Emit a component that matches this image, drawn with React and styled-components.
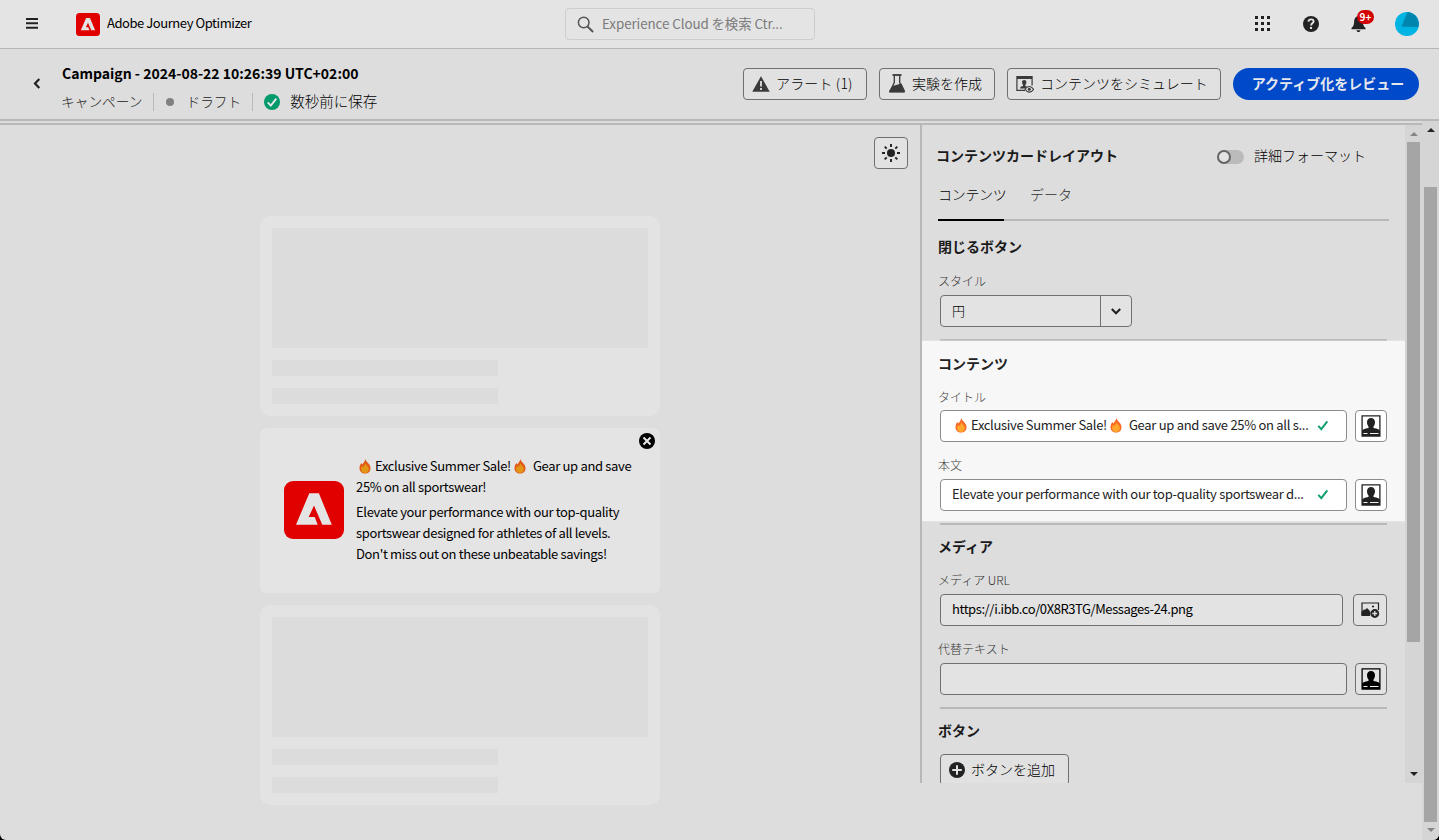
import React from 'react';
import styled, { createGlobalStyle, css } from 'styled-components';

const Global = createGlobalStyle`
  *, *::before, *::after { box-sizing: border-box; }
  body {
    margin: 0;
    background: #000;
    font-family: "Noto Sans CJK JP", "Noto Sans", sans-serif;
    font-size: 14px;
    color: #000;
    overflow: hidden;
  }
  svg { display: block; flex: none; }
`;

const Page = styled.div`
  width: 1439px;
  height: 840px;
  display: flex;
  flex-direction: column;
  overflow: hidden;
  background: #ddd;
  border-radius: 0 0 6px 6px;
`;

const Text = styled.span`
  display: block;
  white-space: nowrap;
  font-size: ${p => p.$size || 14}px;
  font-weight: ${p => p.$weight || 400};
  line-height: ${p => (p.$lh || 20) - (p.$level ? 0 : 2)}px;
  padding-bottom: ${p => (p.$level ? 0 : 2)}px;
  letter-spacing: ${p => p.$ls || 0}px;
  color: ${p => p.$color || '#000'};
`;

const Heading = styled(Text)`
  font-weight: 700;
  margin-left: -2px;
  color: ${p => (p.$lit ? '#222' : '#1a1a1a')};
`;

const TopBar = styled.header`
  height: 49px;
  flex: none;
  display: flex;
  align-items: center;
  justify-content: space-between;
  background: #e4e4e4;
  border-bottom: 1px solid #b5b5b5;
  padding: 0 20px 0 26px;
`;

const Brand = styled.div`
  width: 539px;
  display: flex;
  align-items: center;
  gap: 7px;
  & > svg:first-child { margin-right: 31px; }
`;

const Search = styled.div`
  width: 250px;
  height: 32px;
  margin-right: auto;
  padding: 0 11px;
  display: flex;
  align-items: center;
  gap: 8px;
  border: 1px solid #cdcdcd;
  border-radius: 4px;
`;

const Tools = styled.div`
  display: flex;
  align-items: center;
`;

const HelpIcon = styled.svg`
  margin-left: 32px;
`;

const BellWrap = styled.div`
  position: relative;
  margin: 0 29px 0 32px;
`;

const Badge = styled.span`
  position: absolute;
  left: 6px;
  top: -5px;
  width: 17px;
  height: 14px;
  border-radius: 7px;
  background: #d20000;
  color: #fff;
  font-size: 10px;
  font-weight: 700;
  line-height: 14px;
  text-align: center;
`;

const SubHeader = styled.div`
  height: 72px;
  flex: none;
  display: flex;
  border-bottom: 2px solid #b8b8b8;
  padding: 0 20px 0 33px;
`;

const Back = styled.div`
  width: 29px;
  padding-top: 29px;
`;

const Titles = styled.div`
  flex: 1;
  padding-top: 14px;
`;

const Meta = styled.div`
  display: flex;
  align-items: center;
  height: 20px;
  margin: 9px 0 0 -1px;
`;

const Separator = styled.i`
  width: 1px;
  height: 18px;
  background: #b9b9b9;
  margin: 0 ${p => p.$after}px 0 11px;
`;

const Dot = styled.i`
  width: 8px;
  height: 8px;
  border-radius: 50%;
  background: #808080;
  margin-right: 12px;
`;

const Actions = styled.div`
  display: flex;
  gap: 12px;
  padding-top: 19px;
`;

const Button = styled.button`
  width: ${p => p.$w}px;
  height: 32px;
  padding: 0 0 1px 8px;
  display: flex;
  align-items: center;
  gap: 6px;
  font-family: inherit;
  background: #e1e1e1;
  border: 1px solid #707070;
  border-radius: 4px;
  ${p => p.$primary && css`
    background: #0049c8;
    border: 0;
    border-radius: 16px;
    padding: 0 0 1px 4px;
    justify-content: center;
  `}
`;

const Body = styled.div`
  flex: 1;
  display: flex;
  min-height: 0;
`;

const Workspace = styled.main`
  width: 1422px;
  height: 662px;
  flex: none;
  display: flex;
  border-top: 2px solid #b8b8b8;
  margin-top: 2px;
`;

const Canvas = styled.section`
  width: 920px;
  flex: none;
  display: grid;
  grid-template-columns: 260px 400px 1fr;
  padding: 12px 12px 0 0;
`;

const Cards = styled.div`
  grid-column: 2;
  display: flex;
  flex-direction: column;
  gap: 12px;
  padding-top: 79px;
`;

const SkeletonCard = styled.div`
  height: 200px;
  flex: none;
  border-radius: 10px;
  background: #e3e3e3;
  padding: 12px;
  display: flex;
  flex-direction: column;
  gap: 12px;
`;

const Bone = styled.div`
  width: ${p => p.$w}px;
  height: ${p => p.$h}px;
  background: #dcdcdc;
`;

const MessageCard = styled.article`
  position: relative;
  height: 165px;
  flex: none;
  border-radius: 6px;
  background: #e4e4e4;
  padding: 28px 16px 0 24px;
  display: flex;
  gap: 12px;
  & > svg:first-child { margin-top: 25px; }
`;

const CloseBadge = styled.div`
  position: absolute;
  right: 5px;
  top: 5px;
`;

const Copy = styled.div`
  display: flex;
  flex-direction: column;
`;

const InlineRow = styled.div`
  display: flex;
  align-items: center;
  height: ${p => p.$h || 21}px;
  padding-left: ${p => p.$pl || 0}px;
`;

const Flame = styled.svg`
  margin: 0 ${p => p.$r || 4}px 0 ${p => p.$l || 0}px;
`;

const Paragraph = styled.div`
  margin-top: 4px;
`;

const SquareButton = styled.button`
  width: ${p => p.$w || 32}px;
  height: 32px;
  padding: 0;
  flex: none;
  display: flex;
  align-items: center;
  justify-content: center;
  background: ${p => (p.$lit ? '#fff' : '#e2e2e2')};
  border: 1px solid ${p => (p.$lit ? '#8c8c8c' : '#707070')};
  border-radius: 4px;
  justify-self: end;
`;

const Panel = styled.aside`
  width: 485px;
  flex: none;
  height: 658px;
  overflow: hidden;
  border-left: 2px solid #b8b8b8;
`;

const PanelHead = styled.div`
  height: 62px;
  display: flex;
  align-items: center;
  padding: 0 39px 0 16px;
`;

const Toggle = styled.span`
  width: 27px;
  height: 14px;
  margin: 2px 10px 0 auto;
  border-radius: 7px;
  background: #bbb;
  display: flex;
  &::before {
    content: '';
    width: 14px;
    height: 14px;
    border-radius: 50%;
    border: 2px solid #666;
    background: #e3e3e3;
  }
`;

const Tabs = styled.div`
  height: 34px;
  display: flex;
  gap: 26px;
  margin: 0 16px;
  border-bottom: 2px solid #b8b8b8;
`;

const Tab = styled.div`
  height: 34px;
  border-bottom: 2px solid ${p => (p.$active ? '#000' : 'transparent')};
  width: ${p => (p.$active ? 66 : 50)}px;
`;

const Section = styled.section`
  padding: ${p => p.$top}px 18px 0;
  height: ${p => p.$h}px;
`;

const LitSection = styled(Section)`
  background: #f7f7f7;
  box-shadow: 0 0 2px 0 #f0f0f0;
  position: relative;
`;

const Rule = styled.div`
  height: 2px;
  margin: ${p => p.$mt || 0}px 18px 0;
  background: #b8b8b8;
`;

const Label = styled.label`
  display: block;
  height: 16px;
  line-height: 16px;
  font-size: 12px;
  font-weight: 300;
  color: ${p => (p.$lit ? '#444' : '#333')};
  margin: ${p => p.$mt}px 0 ${p => p.$mb}px -2px;
  white-space: nowrap;
`;

const FieldRow = styled.div`
  display: flex;
  justify-content: space-between;
`;

const Input = styled.div`
  width: ${p => p.$w || 407}px;
  height: 32px;
  display: flex;
  align-items: center;
  justify-content: space-between;
  padding: 0 17px 2px 11px;
  background: ${p => (p.$lit ? '#fff' : '#e3e3e3')};
  border: 1px solid ${p => (p.$lit ? '#8c8c8c' : '#707070')};
  border-radius: 4px;
`;

const Select = styled.div`
  width: 192px;
  height: 32px;
  display: flex;
  border: 1px solid #707070;
  border-radius: 4px;
  background: #e3e3e3;
  & > span { flex: 1; padding: 5px 0 0 11px; }
`;

const SelectArrow = styled.div`
  width: 31px;
  display: flex;
  align-items: center;
  justify-content: center;
  border-left: 1px solid #707070;
`;

const Track = styled.div`
  width: 17px;
  flex: none;
  height: ${p => p.$h}px;
  background: #d5d5d5;
  padding: 0 2px;
  display: flex;
  flex-direction: column;
`;

const Thumb = styled.div`
  height: ${p => p.$h}px;
  background: #a5a5a5;
`;

const ArrowSlot = styled.div`
  height: ${p => p.$h}px;
  display: flex;
  justify-content: center;
  padding-top: ${p => p.$pt}px;
`;

const Arrow = ({ down, color }) => (
  <svg width="8" height="4" viewBox="0 0 8 4">
    <path d={down ? 'M0 0h8L4 4z' : 'M0 4h8L4 0z'} fill={color} />
  </svg>
);

const AdobeMark = ({ w, h, r }) => (
  <svg width={w} height={h} viewBox="0 0 60 58" preserveAspectRatio="none">
    <rect width="60" height="58" rx={r} fill="#e10000" />
    <path d="M25.300 12.300h9.600L47.800 43.800h-9.500L30 24.600l-5.300 11.500h6l3 7.700H12z" fill="#e4e4e4" />
  </svg>
);

const Fire = ({ lit, l, r }) => (
  <Flame width="12" height="15" viewBox="0 0 12 15" $l={l} $r={r}>
    <path d="M6.400 0c.5 2.200 2 3 3 4.600C10.800 6 11.500 7.500 11.500 9.300c0 3.300-2.400 5.300-5.500 5.300S.5 12.500.5 9.300C.5 7 1.300 5.300 2.400 4l.9 1.400C4.600 4 5.900 2.300 6.400 0z" fill={lit ? '#fb6a25' : '#e25a17'} />
    <path d="M6.300 4.300c.4 1.200 1.600 2 2.300 3 .8 1 1.200 1.700 1.200 2.800 0 2.500-1.600 4-3.800 4s-3.900-1.500-3.900-4c0-1.400.5-2.200 1.200-3l.8.9c1.200-1 2-2.200 2.200-3.700z" fill={lit ? '#fda72d' : '#e29615'} />
  </Flame>
);

const Check = () => (
  <svg width="12" height="11" viewBox="0 0 12 11">
    <path d="M1.300 5.800l3 3.300L10.300 1.400" fill="none" stroke="#12a06f" strokeWidth="2" />
  </svg>
);

const Profile = ({ color = '#000' }) => (
  <svg width="20" height="22" viewBox="0 0 20 22">
    <path d="M1.100 .8h17.800v20.400H1.100z" fill="none" stroke={color} strokeWidth="1.300" />
    <path d="M1 21V16c0-1.500 2.500-2.500 6.500-3.100v-1.400C6.400 10.400 6 8.700 6 7.300c0-2.600 1.500-4.300 4-4.300s4 1.700 4 4.300c0 1.400-.5 3.100-1.500 4.200v1.400c4 .6 6.500 1.600 6.500 3.100v5z" fill={color} />
    <path d="M2.500 18.500h4M9 18.500h8.500" stroke="#f4f4f4" strokeWidth="1.200" />
  </svg>
);

const Bones = () => (
  <SkeletonCard>
    <Bone $w={376} $h={120} />
    <Bone $w={226} $h={16} />
    <Bone $w={226} $h={16} />
  </SkeletonCard>
);

export default function App() {
  return (
    <>
      <Global />
      <Page>
        <TopBar>
          <Brand>
            <svg width="12" height="12" viewBox="0 0 12 12"><path d="M0 1h12M0 5.300h12M0 9.700h12" stroke="#222" strokeWidth="1.900" /></svg>
            <AdobeMark w={24} h={23} r={9} />
            <Text $size={13} $ls={-0.44}>Adobe Journey Optimizer</Text>
          </Brand>
          <Search>
            <svg width="17" height="17" viewBox="0 0 17 17" fill="none" stroke="#555"><circle cx="6.700" cy="6.500" r="5.300" strokeWidth="1.500" /><path d="M10.500 10.500l5.600 5.500" strokeWidth="1.900" /></svg>
            <Text $size={13.4} $color="#7b7b7b" $ls={-0.09}>Experience Cloud を検索 Ctr...</Text>
          </Search>
          <Tools>
            <svg width="16" height="16" viewBox="0 0 16 16" fill="#222">
              {[0, 6, 12].map(y => [0, 6, 12].map(x => <rect key={x + '-' + y} x={x} y={y} width="3" height="3" />))}
            </svg>
            <HelpIcon width="16" height="16" viewBox="0 0 16 16">
              <circle cx="8" cy="8" r="8" fill="#222" />
              <path d="M5.400 5.600c.2-1.500 1.200-2.200 2.700-2.200 1.600 0 2.500.8 2.500 2 0 1.900-2.500 2-2.500 4" fill="none" stroke="#e4e4e4" strokeWidth="1.900" />
              <circle cx="8" cy="11.900" r="1.200" fill="#e4e4e4" />
            </HelpIcon>
            <BellWrap>
              <svg width="15" height="18" viewBox="0 0 15 18" fill="#222">
                <path d="M7.500 1C4.300 1.500 3.300 4 3.100 7c-.2 3-.6 4.500-2.600 6v1.200h14V13c-2-1.500-2.400-3-2.600-6C11.700 4 10.700 1.500 7.500 1zM5.500 15.200h4c-.4 1.300-1 1.900-2 1.900s-1.600-.6-2-1.900z" />
              </svg>
              <Badge>9+</Badge>
            </BellWrap>
            <svg width="24" height="24" viewBox="0 0 24 24">
              <circle cx="12" cy="12" r="12" fill="#00b4e4" />
              <path d="M12.500 0A12 12 0 0 1 23.300 15.200L6.500 14.500z" fill="#0086ae" />
            </svg>
          </Tools>
        </TopBar>

        <SubHeader>
          <Back>
            <svg width="8" height="11" viewBox="0 0 8 11"><path d="M6.300 1L2 5.500 6.300 10" fill="none" stroke="#222" strokeWidth="2.200" /></svg>
          </Back>
          <Titles>
            <Text $level $weight={700}>Campaign - 2024-08-22 10:26:39 UTC+02:00</Text>
            <Meta>
              <Text $weight={300} $color="#222" $size={13.7}>キャンペーン</Text>
              <Separator $after={12} />
              <Dot />
              <Text $weight={300} $color="#222" $size={13.7}>ドラフト</Text>
              <Separator $after={11} />
              <svg width="16" height="16" viewBox="0 0 16 16"><circle cx="8" cy="8" r="8" fill="#009a6c" /><path d="M3.700 8.300l3.100 3.300 5.500-7" fill="none" stroke="#e8e8e8" strokeWidth="1.900" /></svg>
              <InlineRow $pl={10}><Text $size={14.5} $weight={300}>数秒前に保存</Text></InlineRow>
            </Meta>
          </Titles>
          <Actions>
            <Button $w={124}>
              <svg width="18" height="16" viewBox="0 0 18 16"><path d="M9 .3L17.700 15.700H.3z" fill="#3a3a3a" /><path d="M9 5v5.500M9 12v2" stroke="#e1e1e1" strokeWidth="1.800" /></svg>
              <Text $weight={300} $ls={0.15}>アラート (1)</Text>
            </Button>
            <Button $w={116}>
              <svg width="18" height="19" viewBox="0 0 18 19"><path d="M4.500 1h9" stroke="#3a3a3a" strokeWidth="1.800" /><path d="M6.300 1.500v7L2 17.500h14L11.700 8.500v-7" fill="none" stroke="#3a3a3a" strokeWidth="1.300" /><path d="M4.500 12l9-2.500 3.500 7.500-.7 1.500H1.500L1.100 17z" fill="#3a3a3a" /></svg>
              <Text $weight={300}>実験を作成</Text>
            </Button>
            <Button $w={214}>
              <svg width="18" height="18" viewBox="0 0 18 18" fill="#3a3a3a">
                <path d="M.3 1h16.400v9.500h-1.200V4H1.500v10.700H9V16H.3z" />
                <path d="M4 13.500c0-1.700 1.500-2.200 3-2.500v-1C6.300 9 6 8.300 6 7.300c0-1.400.8-2.300 2.200-2.300s2.200.9 2.200 2.300c0 1-.3 1.700-1 2.700v1l1.600.5-2 2z" />
                <path d="M9 14.300c1.300-2 2.600-2.800 4.300-2.800s3 .8 4.300 2.800c-1.300 2-2.600 2.800-4.300 2.800S10.300 16.300 9 14.300z" fill="#e1e1e1" stroke="#3a3a3a" strokeWidth="1.100" />
                <circle cx="13.300" cy="14.300" r="1.500" />
              </svg>
              <Text $weight={300}>コンテンツをシミュレート</Text>
            </Button>
            <Button $w={186} $primary>
              <Text $weight={700} $color="#e6e8ee">アクティブ化をレビュー</Text>
            </Button>
          </Actions>
        </SubHeader>

        <Body>
          <Workspace>
            <Canvas>
              <Cards>
                <Bones />
                <MessageCard>
                  <AdobeMark w={60} h={58} r={9} />
                  <Copy>
                    <InlineRow $pl={3}>
                      <Fire r={4} />
                      <Text $size={13} $ls={-0.33}>Exclusive Summer Sale!</Text>
                      <Fire l={3} r={7} />
                      <Text $size={13} $ls={-0.33}>Gear up and save</Text>
                    </InlineRow>
                    <Text $size={13} $lh={21} $ls={-0.33}>25% on all sportswear!</Text>
                    <Paragraph>
                      <Text $size={13} $lh={21} $ls={-0.36}>Elevate your performance with our top-quality</Text>
                      <Text $size={13} $lh={21} $ls={-0.36}>sportswear designed for athletes of all levels.</Text>
                      <Text $size={13} $lh={21} $ls={-0.36}>Don't miss out on these unbeatable savings!</Text>
                    </Paragraph>
                  </Copy>
                  <CloseBadge>
                    <svg width="16" height="16" viewBox="0 0 16 16"><circle cx="8" cy="8" r="8" fill="#000" /><path d="M4.500 4.500l7 7M11.500 4.500l-7 7" stroke="#e8e8e8" strokeWidth="2" /></svg>
                  </CloseBadge>
                </MessageCard>
                <Bones />
              </Cards>
              <SquareButton $w={34}>
                <svg width="18" height="18" viewBox="0 0 18 18">
                  <circle cx="9" cy="9" r="4" fill="#222" />
                  <path d="M9 0v3M9 15v3M0 9h3M15 9h3M2.700 2.700l2 2M13.300 13.300l2 2M15.300 2.700l-2 2M4.700 13.300l-2 2" stroke="#222" strokeWidth="1.900" />
                </svg>
              </SquareButton>
            </Canvas>
            <Panel>
              <PanelHead>
                <Heading>コンテンツカードレイアウト</Heading>
                <Toggle />
                <Text $weight={300}>詳細フォーマット</Text>
              </PanelHead>
              <Tabs>
                <Tab $active><Text $weight={300} $lh={16} $ls={-0.3}>コンテンツ</Text></Tab>
                <Tab><Text $weight={300} $lh={16} $color="#333">データ</Text></Tab>
              </Tabs>
              <Section $top={16} $h={118}>
                <Heading>閉じるボタン</Heading>
                <Label $mt={16} $mb={6}>スタイル</Label>
                <Select>
                  <Text $level $weight={300} $size={13}>円</Text>
                  <SelectArrow>
                    <svg width="10" height="7" viewBox="0 0 10 7"><path d="M.8 1L5 5.300 9.200 1" fill="none" stroke="#222" strokeWidth="2.100" /></svg>
                  </SelectArrow>
                </Select>
              </Section>
              <Rule />
              <LitSection $top={13} $h={180}>
                <Heading $lit>コンテンツ</Heading>
                <Label $lit $mt={15} $mb={5}>タイトル</Label>
                <FieldRow>
                  <Input $lit>
                    <InlineRow $pl={3}>
                      <Fire lit r={4} />
                      <Text $level $size={13} $ls={-0.33} $color="#222">Exclusive Summer Sale!</Text>
                      <Fire lit l={3} r={7} />
                      <Text $level $size={13} $ls={-0.3} $color="#222">Gear up and save 25% on all s...</Text>
                    </InlineRow>
                    <Check />
                  </Input>
                  <SquareButton $lit><Profile color="#222" /></SquareButton>
                </FieldRow>
                <Label $lit $mt={15} $mb={6}>本文</Label>
                <FieldRow>
                  <Input $lit>
                    <Text $level $size={13} $ls={-0.33} $color="#222">Elevate your performance with our top-quality sportswear d...</Text>
                    <Check />
                  </Input>
                  <SquareButton $lit><Profile color="#222" /></SquareButton>
                </FieldRow>
              </LitSection>
              <Rule $mt={2} />
              <Section $top={12} $h={182}>
                <Heading>メディア</Heading>
                <Label $mt={15} $mb={6}>メディア URL</Label>
                <FieldRow>
                  <Input $w={403}><Text $level $size={13} $ls={-0.43}>https://i.ibb.co/0X8R3TG/Messages-24.png</Text></Input>
                  <SquareButton $w={34}>
                    <svg width="19" height="16" viewBox="0 0 19 16">
                      <path d="M1 13.500V1h16.500v7" fill="none" stroke="#222" strokeWidth="1.200" />
                      <path d="M.5 14V10L3 7.500h1.500L6 6l2 2 1.500 2-.5 4z" fill="#222" />
                      <circle cx="12" cy="4.500" r="1.100" fill="#222" />
                      <circle cx="13.800" cy="11.500" r="4.400" fill="#222" />
                      <path d="M13.800 9v5M11.300 11.500h5" stroke="#e2e2e2" strokeWidth="1.300" />
                    </svg>
                  </SquareButton>
                </FieldRow>
                <Label $mt={15} $mb={6}>代替テキスト</Label>
                <FieldRow>
                  <Input />
                  <SquareButton><Profile /></SquareButton>
                </FieldRow>
              </Section>
              <Rule />
              <Section $top={12} $h={90}>
                <Heading>ボタン</Heading>
                <InlineRow $h={58}>
                  <Button $w={129}>
                    <svg width="16" height="16" viewBox="0 0 16 16"><circle cx="8" cy="8" r="8" fill="#222" /><path d="M8 3.200v9.600M3.200 8h9.600" stroke="#e2e2e2" strokeWidth="2" /></svg>
                    <Text $weight={300}>ボタンを追加</Text>
                  </Button>
                </InlineRow>
              </Section>
            </Panel>
            <Track $h={658}>
              <ArrowSlot $h={17} $pt={7}><Arrow color="#858585" /></ArrowSlot>
              <Thumb $h={500} />
              <ArrowSlot $h={141} $pt={130}><Arrow down color="#222" /></ArrowSlot>
            </Track>
          </Workspace>
          <Track $h={719}>
            <ArrowSlot $h={66} $pt={7}><Arrow color="#222" /></ArrowSlot>
            <Thumb $h={635} />
            <ArrowSlot $h={17} $pt={6}><Arrow down color="#858585" /></ArrowSlot>
          </Track>
        </Body>
      </Page>
    </>
  );
}
